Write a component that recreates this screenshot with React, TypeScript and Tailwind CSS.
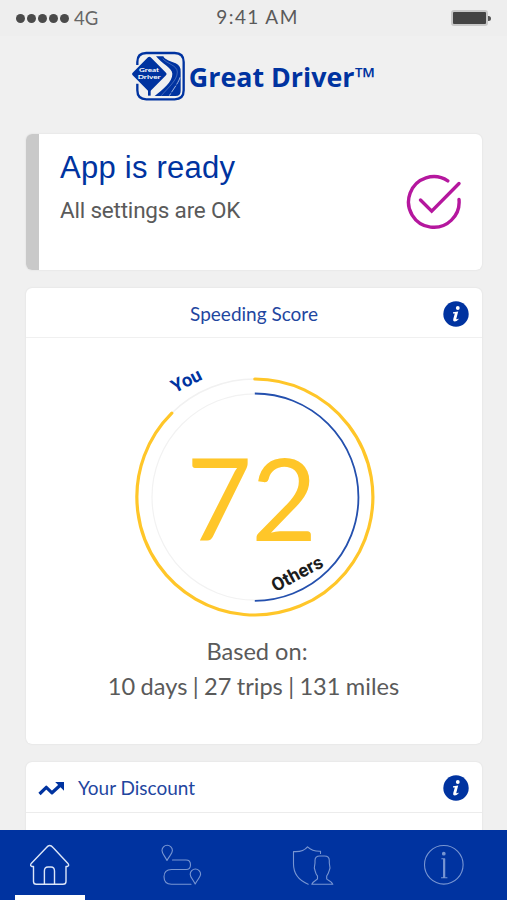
import { FC, ReactNode } from "react";

const NAV_ITEMS = ["home", "trips", "profile", "info"] as const;

type NavItem = (typeof NAV_ITEMS)[number];

const StatusBar: FC = () => (
  <div className="h-9 shrink-0 flex items-center justify-between pl-4 pr-4 bg-[#eeeeee] text-[#4a4a4a] font-['Lato',sans-serif]">
    <div className="flex flex-1 items-center">
      <div className="flex gap-[2px] mr-[5px]">
        {[1, 2, 3, 4, 5].map((dot) => (
          <span key={dot} className="size-[9px] rounded-full bg-[#4a4a4a]" />
        ))}
      </div>
      <span className="text-[18.5px] leading-6 text-[#666]">4G</span>
    </div>
    <span className="text-[19px] leading-6 tracking-[1.4px] pl-[8px] pb-[3px] text-[#5a5a5a]">9:41 AM</span>
    <div className="flex flex-1 items-center justify-end">
      <div className="w-[37px] h-4 rounded-[3px] border-2 border-[#c8c8c8] bg-[#444]" />
      <div className="w-[3px] h-[5px] rounded-r-full bg-[#555]" />
    </div>
  </div>
);

const Logo: FC = () => (
  <svg viewBox="33 33 165 150" className="w-[55px] h-[50px]">
    <path
      d="M52 75V66Q52 39 79 39H164Q191 39 191 66V151Q191 178 164 178H79Q52 178 52 151V131"
      fill="none"
      stroke="#0033a0"
      strokeWidth="7"
    />
    <path
      d="M108 49H130C134 59 151 63 167 70C178 75 183 84 182 96V153Q182 168 167 168H104C128 148 158 126 157 101C156 85 125 70 108 49Z"
      fill="#0033a0"
    />
    <path
      d="M128 56C139 70 172 76 172 96C172 121 144 143 124 167"
      fill="none"
      stroke="#7f9ad2"
      strokeWidth="1.5"
    />
    <path d="M180 112C176 128 160 147 148 167" fill="none" stroke="#c3d0ec" strokeWidth="2.5" strokeDasharray="24 4" />
    <path d="M84 145H92V167H84Z" fill="#0033a0" />
    <path
      d="M84 52Q88 48 92 52L138 98Q142 102 138 106L92 152Q88 156 84 152L38 106Q34 102 38 98Z"
      fill="#0033a0"
    />
    <g fill="#fff" fontSize="14" className="font-['Lato',sans-serif] font-bold">
      <text x="57" y="97" textLength="60" lengthAdjust="spacingAndGlyphs">
        Great
      </text>
      <text x="53" y="116" textLength="69" lengthAdjust="spacingAndGlyphs">
        Driver
      </text>
    </g>
  </svg>
);

const CheckIcon: FC = () => (
  <svg
    viewBox="0 0 56 56"
    className="size-14"
    fill="none"
    stroke="#b5179e"
    strokeWidth="3.4"
    strokeLinecap="round"
  >
    <path d="M41.8 6.9A25.3 25.3 0 1 0 53 25.5" />
    <path d="M14.5 26L25.7 37.2L53 9.5" />
  </svg>
);

const InfoBadge: FC = () => (
  <svg viewBox="0 0 26 26" className="size-[26px]">
    <circle cx="13" cy="13" r="12.7" fill="#0033a0" />
    <circle cx="14.8" cy="7" r="1.9" fill="#fff" />
    <path
      d="M10 11.3L15.2 10.5L13.3 17.8Q13.2 18.9 15.4 17.4L15.5 18.5Q13.6 20.6 11.7 20.6Q9.7 20.6 10.2 18.3L11.8 12.5L10 12.5Z"
      fill="#fff"
    />
  </svg>
);

const TrendIcon: FC = () => (
  <svg viewBox="0 0 27 15" className="w-[27px] h-[15px]">
    <path d="M1.5 13L8.3 6.3L14 11.8L22.5 4" fill="none" stroke="#0033a0" strokeWidth="3.2" strokeLinejoin="round" />
    <path d="M17.2 1H26V9.8Z" fill="#0033a0" />
  </svg>
);

const NavIcon: FC<{ item: NavItem }> = ({ item }) => {
  const isActive = item === "home";

  return (
    <svg
      viewBox="0 0 42 42"
      className="size-[42px]"
      fill="none"
      stroke={isActive ? "#dce6f8" : "#7896d2"}
      strokeWidth={isActive ? "1.4" : "1.1"}
      strokeLinecap="round"
      strokeLinejoin="round"
    >
      {item === "home" && (
        <>
          <path d="M4.5 22.5V37.5Q4.5 40.3 7.3 40.3H34Q37 40.3 37 37.5V22.5H38.2Q40.5 21.7 39.2 19.8L24 3.5Q20.7-.4 17.5 3.5L2 19.8Q.8 21.7 3 22.5Z" />
          <path d="M15.4 40V27Q15.4 23 19 23H22Q25.5 23 25.5 27V40" />
        </>
      )}
      {item === "trips" && (
        <>
          <path d="M7 16.5C4.5 11.5 2 9.5 2 6.5A5.2 5.2 0 0 1 12.4 6.5C12.4 9.5 9.5 11.5 7 16.5Z" />
          <path d="M35.2 40C32.7 35 30.2 33 30.2 30.2A5.2 5.2 0 0 1 40.6 30.2C40.6 33 37.7 35 35.2 40Z" />
          <path d="M12.5 16H26Q30.5 16 30.5 20.8T26 25.5H11.5Q4 25.5 4 32.8T11.5 40.2H31" />
        </>
      )}
      {item === "profile" && (
        <>
          <path d="M16.2 40.2C6 36 1.5 29.5 1.5 20V7.5Q11 8.3 15.5 2.8Q20.5 7.5 28.5 7.2V9.5" />
          <path d="M19.8 40.2H40.8C39 37 35 36 34.7 34.8V32C37 29 36.8 27.5 38 24L37.3 19V16.5Q37.3 12 32.5 12H27.8Q23 12 23 16.5V19L22.3 24C23.5 27.5 23 29.5 25.5 32V34.8C25 36 21 37 19.8 40.2Z" />
        </>
      )}
      {item === "info" && (
        <>
          <circle cx="20.8" cy="20.8" r="19.3" />
          <circle cx="20.8" cy="9.7" r="1.3" fill="#7896d2" />
          <path d="M18.8 14.8H21.7V33M18.5 33.8H24M20.6 15.5V33.5" />
        </>
      )}
    </svg>
  );
};

const ScoreGauge: FC = () => (
  <svg viewBox="0 0 260 270" className="w-[260px] h-[270px]" fill="none">
    <circle cx="130.8" cy="142" r="118" stroke="#f1f1f1" strokeWidth="1.5" />
    <circle cx="131.2" cy="142" r="103.2" stroke="#f2f2f2" strokeWidth="1.2" />
    <path
      d="M130.8 24A118 118 0 1 1 47.8 58.2"
      stroke="#ffc629"
      strokeWidth="3.2"
      strokeLinecap="round"
    />
    <path d="M130.8 38.5A103.5 103.5 0 0 1 130.8 245.8" stroke="#2450ae" strokeWidth="1.8" />
    <text
      x="62.2"
      y="185.7"
      fill="#ffc629"
      fontSize="113.5"
      textLength="131"
      className="font-['Lato',sans-serif]"
    >
      72
    </text>
    <text
      transform="translate(51 38.3) rotate(-27)"
      fill="#0033a0"
      fontSize="18.5"
      className="font-['Roboto',sans-serif] font-bold"
    >
      You
    </text>
    <text
      transform="translate(151.5 237.3) rotate(-28)"
      fill="#1c1c1c"
      fontSize="18.5"
      className="font-['Roboto',sans-serif] font-bold"
    >
      Others
    </text>
  </svg>
);

interface ICardHeaderProps {
  title: string;
  icon?: ReactNode;
}

const CardHeader: FC<ICardHeaderProps> = ({ title, icon }) => (
  <div
    className={
      icon
        ? "h-[51px] flex items-center pl-3 pr-[13px] border-b border-[#ececec] pt-[2px]"
        : "h-[50px] flex items-center pl-3 pr-[13px] border-b border-[#f0f0f0] pt-[3px]"
    }
  >
    {icon}
    <h2
      className={
        icon
          ? "flex-1 pl-[13px] text-[19px] text-[#1f469f] font-['Lato',sans-serif]"
          : "flex-1 pl-[27px] text-center text-[19px] text-[#1f469f] font-['Lato',sans-serif]"
      }
    >
      {title}
    </h2>
    <InfoBadge />
  </div>
);

const App: FC = () => {
  return (
    <div className="h-screen flex flex-col overflow-hidden bg-[#f0f0f0]">
      <StatusBar />

      <main className="flex-1 min-h-0 overflow-hidden pl-[26px] pr-[25px]">
        <header className="h-[98px] flex items-start justify-center pt-[15px] pr-[2px]">
          <Logo />
          <h1 className="ml-[3px] mt-[8px] text-[26.8px] leading-9 font-bold text-[#0033a0] font-['Open_Sans',sans-serif]">
            Great Driver™
          </h1>
        </header>

        <section className="h-[136px] flex rounded-md overflow-hidden bg-white shadow-[0_0_2px_rgba(0,0,0,0.1)] mb-[18px]">
          <div className="w-[13px] bg-[#c9c9c9]" />
          <div className="flex-1 pl-[21px] pt-[14px]">
            <h2 className="text-[31px] leading-10 tracking-[0.25px] text-[#0033a0] font-['Liberation_Sans',sans-serif]">
              App is ready
            </h2>
            <p className="mt-[8px] text-[22.5px] leading-7 tracking-[-0.2px] text-[#5a5a5a] font-['Roboto',sans-serif]">
              All settings are OK
            </p>
          </div>
          <div className="flex items-center pr-5">
            <CheckIcon />
          </div>
        </section>

        <section className="h-[456px] rounded-md overflow-hidden bg-white shadow-[0_0_2px_rgba(0,0,0,0.1)] mb-[18px]">
          <CardHeader title="Speeding Score" />
          <div className="flex flex-col items-center pt-[17px]">
            <ScoreGauge />
            <div className="mt-[9px] text-center text-[23.6px] leading-[35px] text-[#5a5a5a] font-['Lato',sans-serif]">
              <p className="pl-[6px]">Based on:</p>
              <p className="pr-[1px] [word-spacing:-0.7px]">10 days | 27 trips | 131 miles</p>
            </div>
          </div>
        </section>

        <section className="h-[200px] rounded-t-md bg-white shadow-[0_0_2px_rgba(0,0,0,0.1)]">
          <CardHeader title="Your Discount" icon={<TrendIcon />} />
        </section>
      </main>

      <nav className="h-[70px] shrink-0 flex justify-between pl-[15px] pr-[28px] bg-[#0033a0]">
        {NAV_ITEMS.map((item) => (
          <button
            key={item}
            type="button"
            aria-label={item}
            className={
              item === "home"
                ? "w-[70px] pt-[14px] flex justify-center border-b-[5px] border-white"
                : "w-[70px] pt-[14px] flex justify-center"
            }
          >
            <NavIcon item={item} />
          </button>
        ))}
      </nav>
    </div>
  );
};

export default App;
